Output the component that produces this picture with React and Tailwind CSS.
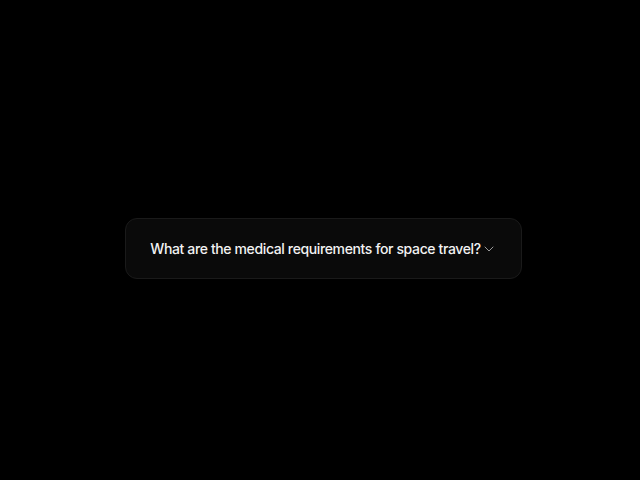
import React from 'react';
import { ChevronDown } from 'lucide-react';

const App = () => {
  return (
    <div className="min-h-screen bg-black pt-[218px] pl-[125px]" style={{ fontFamily: 'Inter, "Noto Sans", sans-serif' }}>
      {/* Question accordion trigger */}
      <button className="flex items-center justify-center gap-0 w-[397px] h-[61px] rounded-xl border border-[#1a1a1a] bg-[#0a0a0a]">
        <span className="text-sm font-medium tracking-[-0.37px] text-[#f2f2f2]">What are the medical requirements for space travel?</span>
        <ChevronDown className="w-4 h-4 text-[#9a9a9a] mt-px" strokeWidth={1.5} />
      </button>
    </div>
  );
};

export default App;
